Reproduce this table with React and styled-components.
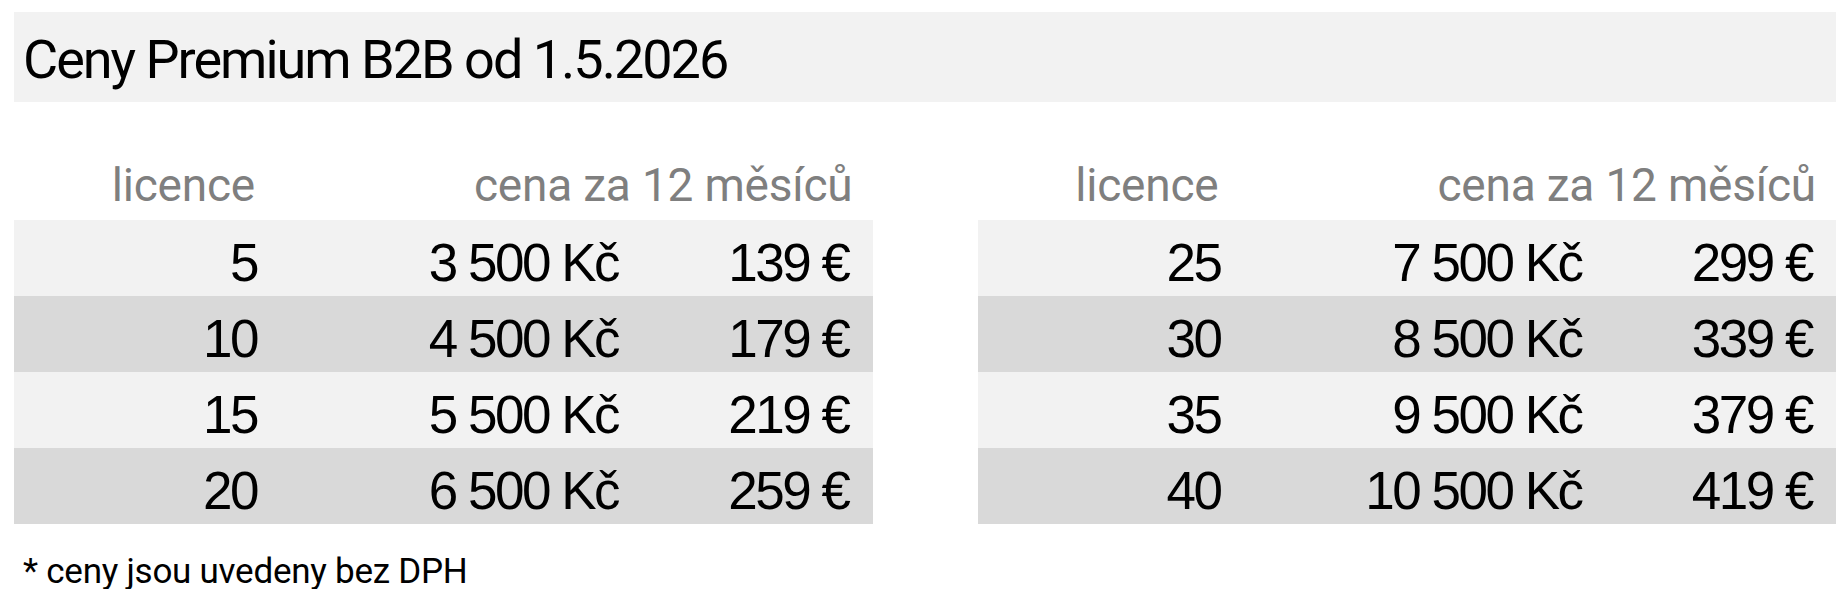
import React from 'react'
import styled, { createGlobalStyle } from 'styled-components'

const GlobalStyle = createGlobalStyle`
  html, body {
    margin: 0;
    padding: 0;
    background: #ffffff;
  }
  body {
    font-family: Roboto, "Liberation Sans", sans-serif;
    color: #000;
  }
`

const Page = styled.div`
  width: 1848px;
  box-sizing: border-box;
  padding: 12px 12px 0 14px;
`

const TitleBar = styled.div`
  height: 90px;
  box-sizing: border-box;
  padding: 6px 0 0 9px;
  background: #f2f2f2;
  font-family: Roboto, sans-serif;
  font-size: 54px;
  line-height: 84px;
  letter-spacing: -2px;
  white-space: nowrap;
`

const Tables = styled.div`
  display: grid;
  grid-template-columns: 1fr 1fr;
  column-gap: 105px;
`

const Row = styled.div`
  display: grid;
  grid-template-columns: 267px 361px 1fr;
  background: ${(p) => p.$bg || 'transparent'};
`

const HeadCell = styled.div`
  grid-column: ${(p) => (p.$span ? `span ${p.$span}` : 'auto')};
  height: 118px;
  box-sizing: border-box;
  display: flex;
  align-items: flex-end;
  justify-content: flex-end;
  padding: 0 ${(p) => p.$pr || 24}px 12px 0;
  font-family: Roboto, sans-serif;
  font-size: 46px;
  line-height: 46px;
  letter-spacing: -0.2px;
  color: #7f7f7f;
  white-space: nowrap;
`

const Cell = styled.div`
  height: 76px;
  box-sizing: border-box;
  padding: 9px 24px 0 0;
  text-align: right;
  font-family: "Liberation Sans", Arial, sans-serif;
  font-size: 53px;
  line-height: 67px;
  letter-spacing: -2.5px;
  white-space: nowrap;
`

const Note = styled.div`
  margin-top: 30px;
  padding-left: 9px;
  font-family: Roboto, sans-serif;
  font-size: 35px;
  line-height: 35px;
  letter-spacing: -0.25px;
`

const left = [
  { n: 5, czk: '3 500 Kč', eur: '139 €' },
  { n: 10, czk: '4 500 Kč', eur: '179 €' },
  { n: 15, czk: '5 500 Kč', eur: '219 €' },
  { n: 20, czk: '6 500 Kč', eur: '259 €' },
]

const right = [
  { n: 25, czk: '7 500 Kč', eur: '299 €' },
  { n: 30, czk: '8 500 Kč', eur: '339 €' },
  { n: 35, czk: '9 500 Kč', eur: '379 €' },
  { n: 40, czk: '10 500 Kč', eur: '419 €' },
]

const PriceTable = ({ rows }) => (
  <div>
    <Row>
      <HeadCell $pr={26}>licence</HeadCell>
      <HeadCell $span={2} $pr={20}>cena za 12 měsíců</HeadCell>
    </Row>
    {rows.map((r, i) => (
      <Row key={r.n} $bg={i % 2 === 0 ? '#f2f2f2' : '#d9d9d9'}>
        <Cell>{r.n}</Cell>
        <Cell>{r.czk}</Cell>
        <Cell>{r.eur}</Cell>
      </Row>
    ))}
  </div>
)

export default function App() {
  return (
    <>
      <GlobalStyle />
      <Page>
        <TitleBar>Ceny Premium B2B od 1.5.2026</TitleBar>
        <Tables>
          <PriceTable rows={left} />
          <PriceTable rows={right} />
        </Tables>
        <Note>* ceny jsou uvedeny bez DPH</Note>
      </Page>
    </>
  )
}
